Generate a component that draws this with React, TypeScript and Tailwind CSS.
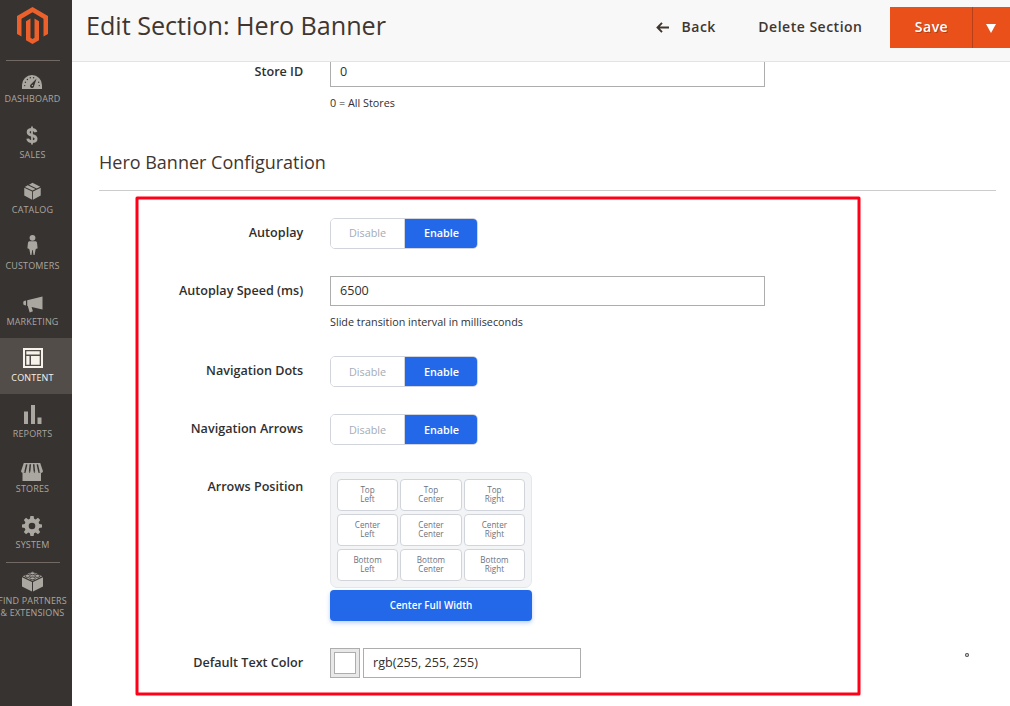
import type { ReactNode } from "react";

type MenuItem = {
  label: string;
  icon: ReactNode;
  active?: boolean;
};

const menuItems: MenuItem[] = [
  {
    label: "Dashboard",
    icon: (
      <svg width="20" height="14" viewBox="0 0 20 14" fill="currentColor" className="mt-[5px]">
        <path d="M0 14V10a10 10 0 0 1 20 0v4z" />
        <g fill="#373330">
          <circle cx="2.7" cy="10.6" r=".7" />
          <circle cx="3.4" cy="7.2" r=".7" />
          <circle cx="5.4" cy="4.5" r=".7" />
          <circle cx="8.3" cy="2.8" r=".7" />
          <circle cx="11.6" cy="2.8" r=".7" />
          <circle cx="16.7" cy="7.2" r=".7" />
          <circle cx="17.3" cy="10.6" r=".7" />
          <path d="M14.6 3.6 12 11.2a2 2 0 1 1-3.3-1.7z" />
        </g>
        <circle cx="10.4" cy="10.5" r=".7" />
      </svg>
    ),
  },
  {
    label: "Sales",
    icon: (
      <svg width="12" height="19" viewBox="0 0 12 19" fill="none" stroke="currentColor">
        <path d="M9.900 6.100C9.500 4.300 8 3.500 6 3.500c-2.300 0-3.900 1-3.900 2.700 0 4.200 8 2.200 8 6.500 0 1.900-1.700 2.900-4.100 2.900-2.400 0-4-1.100-4.300-3" strokeWidth="2.800" />
        <path d="M6 .4v18.200" strokeWidth="1.800" />
      </svg>
    ),
  },
  {
    label: "Catalog",
    icon: (
      <svg width="17" height="18" viewBox="0 0 17.400 19" fill="currentColor">
        <path d="M0 6.200 8.300 10v8.800L0 14.300zM17.400 6.200 9.200 10v8.800l8.200-4.500zM.6 5.200l3.100-1.700 8.200 3.900-3.200 1.600zM5 2.800 8.700.7l8.200 4.400-3.700 1.700z" />
      </svg>
    ),
  },
  {
    label: "Customers",
    icon: (
      <svg width="11" height="22" viewBox="0 0 12 23" fill="currentColor" className="-mt-[3px] ml-px">
        <circle cx="6" cy="3.700" r="3.200" />
        <path d="M3.200 7.500h5.600c1.400 0 2 .7 2.200 2l.5 5c.1 1-.8 1.300-1.500.8l-.7 1.500-.9 5c-.1.900-1.300.9-1.400 0L6.300 17h-.6L5 21.800c-.1.900-1.300.9-1.400 0l-.9-5-.7-1.500c-.7.500-1.600.2-1.500-.8l.5-5c.2-1.300.8-2 2.200-2z" />
      </svg>
    ),
  },
  {
    label: "Marketing",
    icon: (
      <svg width="20" height="17" viewBox="0 0 20 17" fill="currentColor" className="ml-px mt-[3px]">
        <path d="M1 4.900 3 4.400v5L1 8.900Q.3 8.700.3 8V6Q.3 5.200 1 4.900zM4.200 4.200 19.500.4v13.200L8.600 10.900l1.300 4.400-3.200 1.200L4.800 9.900l-.6-.1z" />
      </svg>
    ),
  },
  {
    label: "Content",
    active: true,
    icon: (
      <svg width="20" height="20" viewBox="0 0 20 20" fill="currentColor" className="-mt-px ml-px">
        <path d="M0 0h20v20H0zM2 2v16h16V2z" fillRule="evenodd" />
        <path d="M3.300 3.300h13.400v3.200H3.300zM3.300 8h3.200v8.700H3.300zM8 8h8.700v8.700H8z" />
      </svg>
    ),
  },
  {
    label: "Reports",
    icon: (
      <svg width="18" height="19" viewBox="0 0 18 19" fill="currentColor" className="ml-[2px]">
        <path d="M0 6.500h4V19H0zM7 0h4v19H7zM13.500 12.500h4V19h-4z" />
      </svg>
    ),
  },
  {
    label: "Stores",
    icon: (
      <svg width="22" height="18" viewBox="0 0 22 18" fill="currentColor" className="mt-[4px]">
        <path d="M1.500 10h18.500v8H1.500z" />
        <path d="M2.800 0h16.400L22 8.200a2.200 2.200 0 0 1-4.200.4 2.200 2.200 0 0 1-4.500 0 2.300 2.300 0 0 1-4.600 0 2.200 2.200 0 0 1-4.500 0A2.200 2.200 0 0 1 0 8.200z" />
        <path d="M5.700 1.300 4 8.800M9.300 1.300l-.7 7.500M12.700 1.300l.7 7.500M16.300 1.300 18 8.800" stroke="#373330" strokeWidth="1.500" />
      </svg>
    ),
  },
  {
    label: "System",
    icon: (
      <svg width="20" height="20" viewBox="0 0 20 20" fill="currentColor">
        <path
          fillRule="evenodd"
          d="M8.400 0h3.200l.5 2.700 1.600.7L16 1.800 18.200 4l-1.600 2.300.7 1.600 2.700.5v3.200l-2.700.5-.7 1.600 1.600 2.300-2.200 2.200-2.300-1.600-1.600.7-.5 2.700H8.400l-.5-2.700-1.600-.7L4 18.200 1.800 16l1.600-2.300-.7-1.600L0 11.600V8.400l2.700-.5.7-1.600L1.800 4 4 1.800l2.300 1.600 1.600-.7zM10 6.700a3.300 3.300 0 1 0 0 6.600 3.300 3.300 0 0 0 0-6.600z"
        />
      </svg>
    ),
  },
];

const positions = [
  ["Top", "Left"],
  ["Top", "Center"],
  ["Top", "Right"],
  ["Center", "Left"],
  ["Center", "Center"],
  ["Center", "Right"],
  ["Bottom", "Left"],
  ["Bottom", "Center"],
  ["Bottom", "Right"],
];

function MagentoLogo() {
  return (
    <svg width="31" height="37" viewBox="0 0 31 37" fill="#ec602b" className="shrink-0">
      <path d="M15.500 0 31 9v18l-4.500 2.600V11.700L15.500 5.300 4.500 11.700v17.900L0 27V9z" />
      <path d="M13.500 11.600v19.200l2 1.200 2-1.200V11.600l4.500 2.700v18.900l-6.500 3.800L9 33.200V14.300z" />
    </svg>
  );
}

function PartnersIcon() {
  return (
    <svg width="21" height="21" viewBox="0 0 21 21" fill="currentColor">
      <path d="M0 6.300 10 11v9.600L0 15.500zM21 6.300 11 11v9.600l10-5.100zM.7 5.300 10.500.5l9.800 4.800-9.800 4.800z" />
      <g stroke="#373330" strokeWidth=".9">
        <ellipse cx="10.500" cy="2.300" rx="2.600" ry="1.500" />
        <ellipse cx="5.600" cy="4.900" rx="2.600" ry="1.500" />
        <ellipse cx="15.400" cy="4.900" rx="2.600" ry="1.500" />
        <ellipse cx="10.500" cy="7.400" rx="2.600" ry="1.500" />
      </g>
    </svg>
  );
}

function Sidebar() {
  return (
    <aside className="flex w-[72px] shrink-0 flex-col overflow-hidden bg-[#373330] text-[#aaa6a0]">
      <div className="-ml-[7px] flex w-[79px] flex-col items-center">
        <div className="flex h-[59px] items-start pt-[7px]">
          <MagentoLogo />
        </div>
        <nav className="relative w-full">
          <div className="absolute left-[13px] top-px h-px w-[54px] bg-[#736963]" />
          {menuItems.map((item) => (
            <a
              key={item.label}
              className={`flex h-[55.8px] flex-col items-center text-[9px] uppercase leading-[10px] tracking-[0.16px] ${
                item.active ? "bg-[#524d49] text-[#f7f3eb]" : ""
              }`}
            >
              <span className="-mb-[6.200px] -ml-px flex h-[41px] shrink-0 items-center">{item.icon}</span>
              <span>{item.label}</span>
            </a>
          ))}
        </nav>
        <div className="mt-[1px] h-px w-[54px] bg-[#736963]" />
        <a className="flex flex-col items-center pt-2 text-center text-[9px] uppercase leading-[12px] tracking-[0.16px]">
          <PartnersIcon />
          <span className="mt-[3px] whitespace-nowrap">
            Find Partners
            <br />& Extensions
          </span>
        </a>
      </div>
    </aside>
  );
}

function Header() {
  return (
    <header className="relative z-10 flex h-[62px] shrink-0 items-start border-b border-[#e3e3e3] bg-[#f8f8f8] pl-[14px] text-[#41362f]">
      <h1 className="mt-[8px] flex-1 whitespace-nowrap text-[25.2px] leading-[34px] tracking-[-0.03px]">
        Edit Section: Hero Banner
      </h1>
      <div className="mt-[7px] flex h-[41px] items-center text-[14px] font-semibold tracking-[0.5px]">
        <button className="flex items-center pb-[2px]">
          <svg width="13" height="11" viewBox="0 0 13 11" fill="none" stroke="currentColor" strokeWidth="1.900" className="mr-[13px] mt-px">
            <path d="M6 .8 1.500 5.500 6 10.200M1.500 5.500H13" />
          </svg>
          Back
        </button>
        <button className="ml-[42.500px] pb-[2px]">Delete Section</button>
        <button className="ml-[27.500px] h-[41px] w-[82px] bg-[#ea501a] pb-[2px] pl-px text-white [text-shadow:1px_1px_0_rgba(0,0,0,0.25)]">
          Save
        </button>
        <button className="flex h-[41px] w-[38px] items-center justify-center border-l border-[#b84018] bg-[#ea501a]">
          <svg width="10" height="9" viewBox="0 0 10 9" fill="#fff" className="-ml-px mt-px">
            <path d="M0 0h10L5 9z" />
          </svg>
        </button>
      </div>
    </header>
  );
}

function Field({ label, className = "", children }: { label: string; className?: string; children: ReactNode }) {
  return (
    <div className={`flex gap-[26.800px] ${className}`}>
      <label className="w-[231.200px] shrink-0 pt-[6px] text-right text-[12.600px] font-semibold leading-[18px] text-[#303030]">
        {label}
      </label>
      <div>{children}</div>
    </div>
  );
}

function TextInput({ value, note }: { value: string; note: string }) {
  return (
    <>
      <div className="flex h-[30px] w-[435px] items-center border border-[#adadad] bg-white px-[9px] text-[12.600px] text-[#303030]">
        {value}
      </div>
      <p className="mt-[8px] text-[10.800px] leading-[15px] text-[#303030]">{note}</p>
    </>
  );
}

function Toggle() {
  return (
    <div className="flex h-[31px] w-[148px] overflow-hidden rounded-[5px] border border-[#d1d5db] text-[10.800px]">
      <button className="w-[74px] border-r border-[#d1d5db] bg-white text-[#a5abb6]">Disable</button>
      <button className="flex-1 bg-[#2268e8] pl-px font-semibold text-white">Enable</button>
    </div>
  );
}

export default function App() {
  return (
    <div className="relative flex h-[706px] w-[1010px] overflow-hidden bg-white font-['Open_Sans',sans-serif]">
      <Sidebar />
      <div className="flex min-w-0 flex-1 flex-col">
        <Header />
        <main className="-mt-[5px] flex flex-col">
          <Field label="Store ID" className="h-[90px]">
            <TextInput value="0" note="0 = All Stores" />
          </Field>
          <h2 className="ml-[27px] mr-[14px] h-[44px] border-b border-[#cccccc] pt-[3px] text-[18px] leading-[24px] text-[#41362f]">
            Hero Banner Configuration
          </h2>
          <Field label="Autoplay" className="mt-[27px] h-[58px]">
            <Toggle />
          </Field>
          <Field label="Autoplay Speed (ms)" className="h-[80.400px]">
            <TextInput value="6500" note="Slide transition interval in milliseconds" />
          </Field>
          <Field label="Navigation Dots" className="h-[58px]">
            <Toggle />
          </Field>
          <Field label="Navigation Arrows" className="h-[57.600px]">
            <Toggle />
          </Field>
          <Field label="Arrows Position" className="h-[176px]">
            <div className="grid h-[116px] w-[202px] grid-cols-3 grid-rows-3 gap-x-[2.400px] gap-y-[2.700px] rounded-[7px] border border-[#e5e7eb] bg-[#f3f4f6] p-[6px]">
              {positions.map(([row, col]) => (
                <button
                  key={row + col}
                  className="rounded-[4px] border border-[#d1d5db] bg-white pb-[2px] text-[8.100px] leading-[9px] text-[#6b7280]"
                >
                  {row}
                  <br />
                  {col}
                </button>
              ))}
            </div>
            <button className="mt-[2px] block h-[31px] w-[202px] rounded-[4px] bg-[#2268e8] text-[9.900px] font-semibold text-white shadow-[0_2px_4px_rgba(34,104,232,0.3)]">
              Center Full Width
            </button>
          </Field>
          <Field label="Default Text Color">
            <div className="flex gap-[3px]">
              <div className="size-[30px] border border-[#adadad] bg-[#e8e8e8] p-[3px]">
                <div className="size-full border border-[#adadad] bg-white" />
              </div>
              <div className="flex h-[30px] w-[218px] items-center border border-[#adadad] px-[9px] text-[12.600px] text-[#303030]">
                rgb(255, 255, 255)
              </div>
            </div>
          </Field>
        </main>
      </div>

      {/* highlight frame around the banner options */}
      <svg className="pointer-events-none absolute left-[135px] top-[196px]" width="726" height="500" fill="none">
        <rect x="2" y="2" width="722" height="496" stroke="#ff0018" strokeWidth="3" strokeLinejoin="round" />
      </svg>
      <div className="absolute left-[965px] top-[653px] size-[4px] rounded-[1.500px] border border-[#444] bg-[#bbb]" />
    </div>
  );
}
